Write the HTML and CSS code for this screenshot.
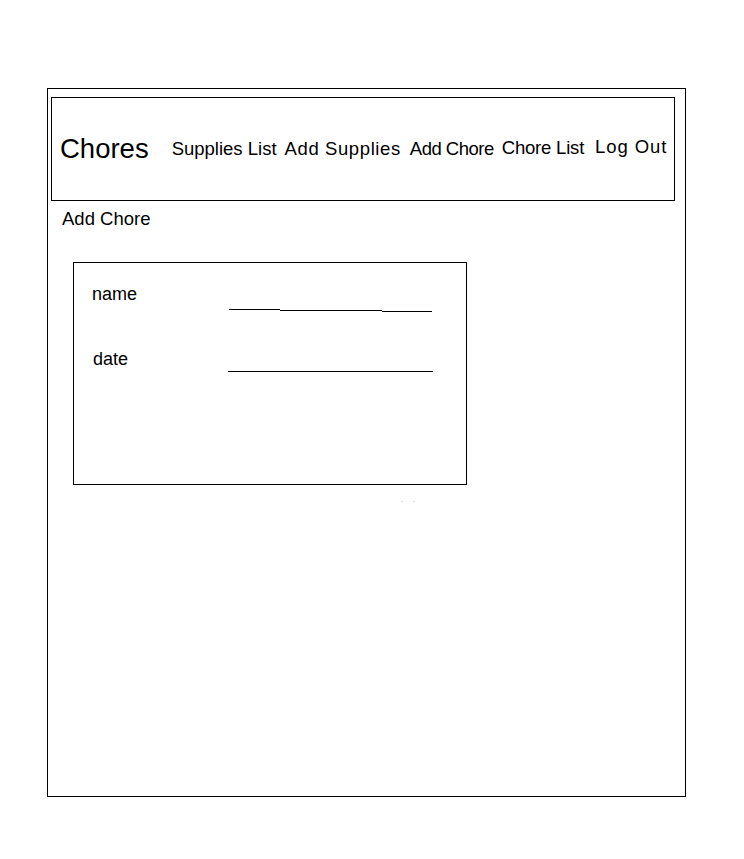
FILE: index.html
```html
<!DOCTYPE html>
<html lang="en">
<head>
  <meta charset="UTF-8" />
  <meta name="viewport" content="width=device-width, initial-scale=1.0"/>
  <title>Chores</title>
  <link rel="stylesheet" href="styles.css">
</head>
<body>

  <div class="frame">
    <header class="navbar">
      <h1 class="site-name">Chores</h1>
      <nav>
        <ul class="nav-links">
          <li class="nav-supplies"><a href="#">Supplies List</a></li>
          <li class="nav-add-supplies"><a href="#">Add Supplies</a></li>
          <li class="nav-add-chore"><a href="#">Add Chore</a></li>
          <li class="nav-chore-list"><a href="#">Chore List</a></li>
          <li class="nav-logout"><a href="#">Log Out</a></li>
        </ul>
      </nav>
    </header>

    <h2 class="page-title">Add Chore</h2>

    <form class="chore-form">
      <div class="field field-name">
        <label for="name">name</label>
        <div class="line line-split">
          <span></span><span></span><span></span>
        </div>
      </div>
      <div class="field field-date">
        <label for="date">date</label>
        <div class="line"></div>
      </div>
    </form>

    <div class="specks"><span></span><span></span></div>
  </div>

</body>
</html>
```

FILE: styles.css
```css
* { margin:0; padding:0; box-sizing:border-box; font-family:'Liberation Sans', Arial, sans-serif; }
body { background:#fff; color:#000; }

.frame {
  width:639px; height:709px;
  margin:88px 0 0 47px;
  border:1px solid #000;
  padding:8px 10px 0 3px;
}

/* top bar */
.navbar {
  height:104px;
  border:1px solid #000;
  display:flex; align-items:center;
  padding:0 0 0 8px;
}
.site-name { font-size:27.5px; font-weight:normal; margin-right:23px; }
.nav-links { list-style:none; display:flex; align-items:center; }
.nav-links li a { color:#000; text-decoration:none; font-size:18.5px; }
.nav-supplies { margin-right:8px; }
.nav-add-supplies { margin-right:9px; letter-spacing:.6px; }
.nav-add-chore { margin-right:8px; letter-spacing:-.5px; }
.nav-chore-list { margin-right:11px; letter-spacing:-.2px; position:relative; top:-1px; }
.nav-logout { position:relative; top:-2px; letter-spacing:.9px; }

.page-title { font-size:18.5px; font-weight:normal; margin:7px 0 0 11px; }

/* form box */
.chore-form {
  width:394px; height:223px;
  margin:32px 0 0 22px;
  border:1px solid #000;
  padding:21px 0 0 18px;
}
.field { display:grid; grid-template-columns:137px 204px; }
.field label { font-size:18px; }
.field-date { margin-top:37px; }
.field-date label { padding-left:1px; }

.line { border-bottom:1px solid #000; }
.field-name .line { border:none; display:flex; align-items:flex-start; padding-top:25px; }
.line-split span { border-bottom:1px solid #000; height:0; }
.line-split span:nth-child(1) { width:51px; }
.line-split span:nth-child(2) { width:102px; margin-top:1px; }
.line-split span:nth-child(3) { width:50px; margin-top:2px; }
.field-date .line { margin-left:-1px; height:23px; }

.specks { display:flex; gap:10px; margin:16px 0 0 350px; }
.specks span { width:2px; height:1px; background:#ddd; }
```
